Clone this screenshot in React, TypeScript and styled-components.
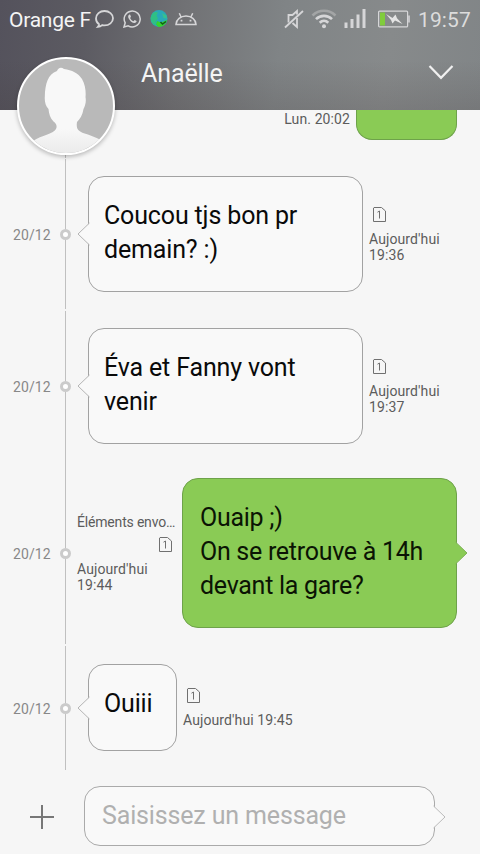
import React from "react";
import styled, { createGlobalStyle } from "styled-components";

const GlobalStyle = createGlobalStyle`
  * { box-sizing: border-box; }
  body { margin: 0; background: #f6f6f6; font-family: Roboto, "Noto Sans", sans-serif; }
`;

const Screen = styled.div`
  width: 480px;
  height: 854px;
  overflow: hidden;
  display: flex;
  flex-direction: column;
  background: #f6f6f6;
`;

const Header = styled.header`
  position: relative;
  flex: none;
  height: 110px;
  color: #f4f4f4;
  background:
    linear-gradient(180deg, rgba(0, 0, 0, 0) 55%, rgba(60, 50, 50, 0.16) 100%),
    linear-gradient(97deg, #54525c 0%, #5c5b62 18%, #717275 38%, #808486 58%, #878a8b 80%, #818587 100%);
`;

const StatusBar = styled.div`
  display: flex;
  align-items: center;
  height: 38px;
  padding: 0 10px 0 9px;
`;

const Carrier = styled.span`
  width: 86px;
  font-size: 21px;
  letter-spacing: -0.25px;
  line-height: 38px;
  white-space: nowrap;
  padding-top: 2px;
`;

const StatusIcon = styled.svg<{ $gap?: number }>`
  display: block;
  flex: none;
  fill: none;
  stroke: #d6d6d8;
  margin-left: ${(p) => p.$gap ?? 0}px;
`;

const Spacer = styled.div`
  flex: 1;
`;

const Clock = styled.span`
  width: 52px;
  margin-left: 8px;
  font-size: 21px;
  letter-spacing: 0.1px;
  line-height: 38px;
  padding-top: 2px;
  color: #dcdcdc;
`;

const TitleBar = styled.div`
  display: flex;
  align-items: center;
  justify-content: space-between;
  height: 72px;
  padding: 0 26px 0 141px;
`;

const Title = styled.h1`
  margin: 0;
  font-size: 25px;
  font-weight: 400;
  line-height: 72px;
  letter-spacing: -0.1px;
`;

const Chevron = styled.svg`
  display: block;
  margin-top: -5px;
`;

const Avatar = styled.div`
  position: absolute;
  left: 17px;
  top: 57px;
  width: 98px;
  height: 98px;
  border-radius: 50%;
  overflow: hidden;
  border: 2px solid #fff;
  background: #b9b9b9;
  box-shadow: 0 2px 4px rgba(0, 0, 0, 0.25);
  z-index: 1;
`;

const Thread = styled.main`
  flex: none;
  height: 661px;
  overflow: hidden;
`;

const Row = styled.section<{ $height: number }>`
  display: grid;
  grid-template-columns: 60px 11px 1fr;
  height: ${(p) => p.$height}px;
`;

const DateLabel = styled.span`
  align-self: center;
  padding: 2px 0 0 13px;
  font-size: 14px;
  line-height: 18px;
  letter-spacing: 0.1px;
  color: #888;
`;

const Rail = styled.div<{ $gapTop?: number; $gapBottom?: number }>`
  display: flex;
  flex-direction: column;
  align-items: center;
  padding: ${(p) => p.$gapTop ?? 0}px 0 ${(p) => p.$gapBottom ?? 0}px;
`;

const RailLine = styled.div`
  flex: 1;
  width: 1px;
  background: #c0c0c0;
`;

const RailDot = styled.div`
  width: 11px;
  height: 11px;
  border-radius: 50%;
  border: 3px solid #cbcbcb;
  background: #fff;
`;

const Content = styled.div<{ $own?: boolean }>`
  display: flex;
  align-items: center;
  justify-content: ${(p) => (p.$own ? "flex-end" : "flex-start")};
  padding: ${(p) => (p.$own ? "0 23px 0 0" : "0 0 0 17px")};
`;

const Bubble = styled.div<{ $own?: boolean; $width: number; $height: number }>`
  position: relative;
  flex: none;
  width: ${(p) => p.$width}px;
  height: ${(p) => p.$height}px;
  padding: ${(p) => (p.$own ? "22px 0 0 17px" : "22px 0 0 15px")};
  border: 1px solid ${(p) => (p.$own ? "#6ea24a" : "#a2a2a2")};
  border-radius: 16px;
  background: ${(p) => (p.$own ? "#8acb55" : "#f9f9f9")};
  color: ${(p) => (p.$own ? "#0b1404" : "#0a0a0a")};
  font-size: 25px;
  letter-spacing: ${(p) => (p.$own ? -0.28 : -0.15)}px;
  line-height: 34px;
  white-space: pre-line;
`;

const Tail = styled.svg<{ $side: "left" | "right"; $top: number }>`
  position: absolute;
  ${(p) => p.$side}: -12px;
  top: ${(p) => p.$top}px;
  display: block;
`;

const Meta = styled.div<{ $own?: boolean; $shift?: number }>`
  display: flex;
  flex-direction: column;
  align-items: ${(p) => (p.$own ? "flex-end" : "flex-start")};
  width: ${(p) => (p.$own ? "105px" : "auto")};
  padding-left: ${(p) => (p.$own ? 0 : 6)}px;
  margin-top: ${(p) => p.$shift ?? 0}px;
`;

const MetaText = styled.span<{ $width?: number; $tight?: boolean }>`
  width: ${(p) => (p.$width ? `${p.$width}px` : "auto")};
  font-size: 14px;
  letter-spacing: ${(p) => (p.$tight ? -0.18 : 0.1)}px;
  line-height: 16px;
  color: #5c5c5c;
  white-space: pre-line;
`;

const SimSvg = styled.svg<{ $own?: boolean }>`
  display: block;
  margin: ${(p) => (p.$own ? "7px 10px 9px 0" : "0 0 9px 4px")};
`;

const TopContent = styled.div`
  display: flex;
  justify-content: flex-end;
  align-items: flex-start;
  padding-right: 23px;
`;

const ClippedBubble = styled.div`
  width: 101px;
  height: 30px;
  margin-left: 6px;
  background: #8acb55;
  border: 1px solid #6ea24a;
  border-top: 0;
  border-radius: 0 0 16px 16px;
`;

const TopTime = styled(MetaText)`
  padding-top: 1px;
`;

const Composer = styled.footer`
  display: flex;
  align-items: flex-start;
  flex: 1;
  padding: 15px 0 0 30px;
`;

const PlusIcon = styled.svg`
  display: block;
  margin: 19px 30px 0 0;
`;

const InputBox = styled.div`
  position: relative;
  width: 351px;
  height: 60px;
  padding-left: 17px;
  border: 1px solid #aaa;
  border-radius: 16px;
  background: #f9f9f9;
  color: #b0b0b0;
  font-size: 25px;
  letter-spacing: -0.15px;
  line-height: 58px;
`;

const BubbleTail = ({ side, top, fill, stroke }: { side: "left" | "right"; top: number; fill: string; stroke: string }) => (
  <Tail $side={side} $top={top} width="13" height="24" viewBox="0 0 13 24">
    {side === "left" ? (
      <path d="M12.5 1 L1 12 L12.5 23" fill={fill} stroke={stroke} />
    ) : (
      <path d="M0.5 1 L12 12 L0.5 23" fill={fill} stroke={stroke} />
    )}
    <path d={side === "left" ? "M12.5 2V22" : "M0.5 2V22"} stroke={fill} strokeWidth="1" />
  </Tail>
);

const SimIcon = ({ own }: { own?: boolean }) => (
  <SimSvg $own={own} width="13" height="15" viewBox="0 0 13 15" fill="none" stroke="#707070">
    <path d="M1 .5H8.5L12.5 4V14.5H.5V1Z" />
    <path d="M4.500 5.200L6.500 4V11.500" />
  </SimSvg>
);

type Message = {
  text: string;
  time: string;
  rowHeight: number;
  width: number;
  height: number;
  own?: boolean;
  folder?: string;
  metaShift?: number;
  gapTop?: number;
  gapBottom?: number;
};

const messages: Message[] = [
  { text: "Coucou tjs bon pr\ndemain? :)", time: "Aujourd'hui\n19:36", rowHeight: 152, width: 275, height: 116, metaShift: 2, gapTop: 1, gapBottom: 1 },
  { text: "Éva et Fanny vont\nvenir", time: "Aujourd'hui\n19:37", rowHeight: 152, width: 275, height: 116, metaShift: 2, gapTop: 1 },
  { text: "Ouaip ;)\nOn se retrouve à 14h\ndevant la gare?", time: "Aujourd'hui\n19:44", rowHeight: 182, width: 275, height: 150, own: true, folder: "Éléments envo…", metaShift: 1 },
  { text: "Ouiii", time: "Aujourd'hui 19:45", rowHeight: 127, width: 89, height: 87, metaShift: 1, gapTop: 2, gapBottom: 1 },
];

const MessageRow = ({ m }: { m: Message }) => (
  <Row $height={m.rowHeight}>
    <DateLabel>20/12</DateLabel>
    <Rail $gapTop={m.gapTop} $gapBottom={m.gapBottom}>
      <RailLine />
      <RailDot />
      <RailLine />
    </Rail>
    <Content $own={m.own}>
      {m.own && (
        <Meta $own $shift={m.metaShift}>
          <MetaText $width={105} $tight>{m.folder}</MetaText>
          <SimIcon own />
          <MetaText $width={105}>{m.time}</MetaText>
        </Meta>
      )}
      <Bubble $own={m.own} $width={m.width} $height={m.height}>
        {m.text}
        <BubbleTail
          side={m.own ? "right" : "left"}
          top={m.height / 2 - 13}
          fill={m.own ? "#8acb55" : "#f9f9f9"}
          stroke={m.own ? "#7fb25a" : "#b4b4b4"}
        />
      </Bubble>
      {!m.own && (
        <Meta $shift={m.metaShift}>
          <SimIcon />
          <MetaText>{m.time}</MetaText>
        </Meta>
      )}
    </Content>
  </Row>
);

export default function App() {
  return (
    <Screen>
      <GlobalStyle />
      <Header>
        <StatusBar>
          <Carrier>Orange F</Carrier>
          <StatusIcon width="19" height="18" viewBox="0 0 19 18" strokeWidth="1.800">
            <path d="M4 14.2C2 12.8 1 10.7 1 8.5C1 4.3 4.8 1 9.5 1S18 4.3 18 8.3S14.2 15.4 9.5 15.4C8.7 15.4 7.9 15.3 7.2 15.1C5.900 16.200 4.400 16.800 2.900 16.900C3.600 16.100 4 15.200 4 14.200Z" />
          </StatusIcon>
          <StatusIcon $gap={9} width="18" height="18" viewBox="0 0 18 18" strokeWidth="1.500">
            <path d="M1 17L2.200 12.800A8 7.900 0 1 1 5.200 15.800Z" />
            <path d="M6.400 4.500C5 5.200 4.800 6.700 5.700 8.400C6.900 10.700 8.700 12.400 11 13C12.500 13.300 13.700 12.300 13.600 11.100L11.600 10L10.500 11.200C8.900 10.500 7.800 9.400 7.100 7.900L8 6.700L7.100 4.500Z" fill="#d6d6d8" stroke="none" />
          </StatusIcon>
          <StatusIcon $gap={9} width="18" height="18" viewBox="0 0 18 18">
            <circle cx="9" cy="8.500" r="8.500" fill="#28a9b8" stroke="none" />
            <path d="M2.500 3.500C4 2 6.500 1.500 8 2.500L6.500 5.500L8 8.500L6 11L5.500 15.500C2 14 .5 11 .7 7.500Z" fill="#2fc084" stroke="none" />
            <path d="M12 3L16.500 5.500L17 8.500L13.500 8Z" fill="#36bf90" stroke="none" />
            <path d="M7 11L11 12.500L17 10C16.500 14 12.500 17.500 8 16.800L6 14.500Z" fill="#36d42c" stroke="none" />
            <path d="M10.500 12L12.500 14L16 11.500" stroke="#145c1c" strokeWidth="1.500" />
          </StatusIcon>
          <StatusIcon $gap={7} width="22" height="14" viewBox="0 0 22 14" strokeWidth="1.500">
            <path d="M1 12.400C1.300 7.500 5.500 4 11 4S20.700 7.500 21 12.400Z" />
            <path d="M6.200 5.200L4.300 1.200M15.800 5.200L17.700 1.200" />
            <path d="M6.500 7.800V9.600M15.500 7.800V9.600" strokeWidth="1.800" />
          </StatusIcon>
          <Spacer />
          <StatusIcon width="20" height="20" viewBox="0 0 20 20" strokeWidth="1.800">
            <path d="M4.500 13.500V6H8.500L13 2V5.500M8.500 14L13 18V9" />
            <path d="M1 18.500L19 2" />
          </StatusIcon>
          <StatusIcon $gap={7} width="26" height="20" viewBox="0 0 26 20" strokeWidth="2.600">
            <path d="M1.500 6.500C8 .2 18 .2 24.500 6.500" stroke="#a3a5a6" />
            <path d="M5 10.200C9.500 5.700 16.500 5.700 21 10.200" />
            <path d="M8.700 13.700C11.200 11.300 14.800 11.300 17.300 13.700" />
            <circle cx="13" cy="17.200" r="2" fill="#d6d6d8" stroke="none" />
          </StatusIcon>
          <StatusIcon $gap={7} width="22" height="20" viewBox="0 0 22 20" strokeWidth="3">
            <path d="M2 19V13.500M8 19V10M14 19V5.500M20 19V0" />
          </StatusIcon>
          <StatusIcon $gap={12} width="32" height="18" viewBox="0 0 32 18" strokeWidth="1.200">
            <rect x=".6" y="1.100" width="29" height="15.800" rx="1" />
            <rect x="2" y="2.500" width="5" height="13" fill="#80cc3c" stroke="none" />
            <path d="M31 5.500V12.500" strokeWidth="1.500" />
            <path d="M8 4L14.500 8L17.500 4.500L19 8.200L24.500 14L17 10.500L14.500 13.500L13 10Z" fill="#e4e4e4" stroke="none" />
          </StatusIcon>
          <Clock>19:57</Clock>
        </StatusBar>
        <TitleBar>
          <Title>Anaëlle</Title>
          <Chevron width="26" height="16" viewBox="0 0 26 16" fill="none" stroke="#f0f0f0" strokeWidth="2.200">
            <path d="M1.500 2L13 13.800L24.500 2" />
          </Chevron>
        </TitleBar>
        <Avatar>
          <svg width="94" height="94" viewBox="0 0 94 94">
            <defs>
              <linearGradient id="bust" x1="0" y1="0" x2="0" y2="1">
                <stop offset="0.700" stopColor="#f8f8f8" />
                <stop offset="1" stopColor="#eaeaea" />
              </linearGradient>
            </defs>
            <path
              d="M14 82C23 76 34 75 37 70C38.500 67 37 64 34.500 62.500C31 59 30 55 29.500 50C26.500 47 25.500 42 25.800 38C26 25 29 15 38 12C39 9 42 7.500 45 10C53 11 59 14 63 20C66.500 26 67 33 66.500 38C67.500 43 66 47 64.500 50C63.500 56 61 60 58 63C57 70 59 72 64 74C71 76 76 78 82 81L82 96H14Z"
              fill="url(#bust)"
            />
          </svg>
        </Avatar>
      </Header>
      <Thread>
        <Row $height={48}>
          <span />
          <Rail>
            <RailLine />
          </Rail>
          <TopContent>
            <TopTime>Lun. 20:02</TopTime>
            <ClippedBubble />
          </TopContent>
        </Row>
        {messages.map((m) => (
          <MessageRow key={m.time} m={m} />
        ))}
      </Thread>
      <Composer>
        <PlusIcon width="24" height="24" viewBox="0 0 24 24" stroke="#777" strokeWidth="2">
          <path d="M0 12H24M12 0V24" />
        </PlusIcon>
        <InputBox>
          Saisissez un message
          <BubbleTail side="right" top={18} fill="#f9f9f9" stroke="#bababa" />
        </InputBox>
      </Composer>
    </Screen>
  );
}
